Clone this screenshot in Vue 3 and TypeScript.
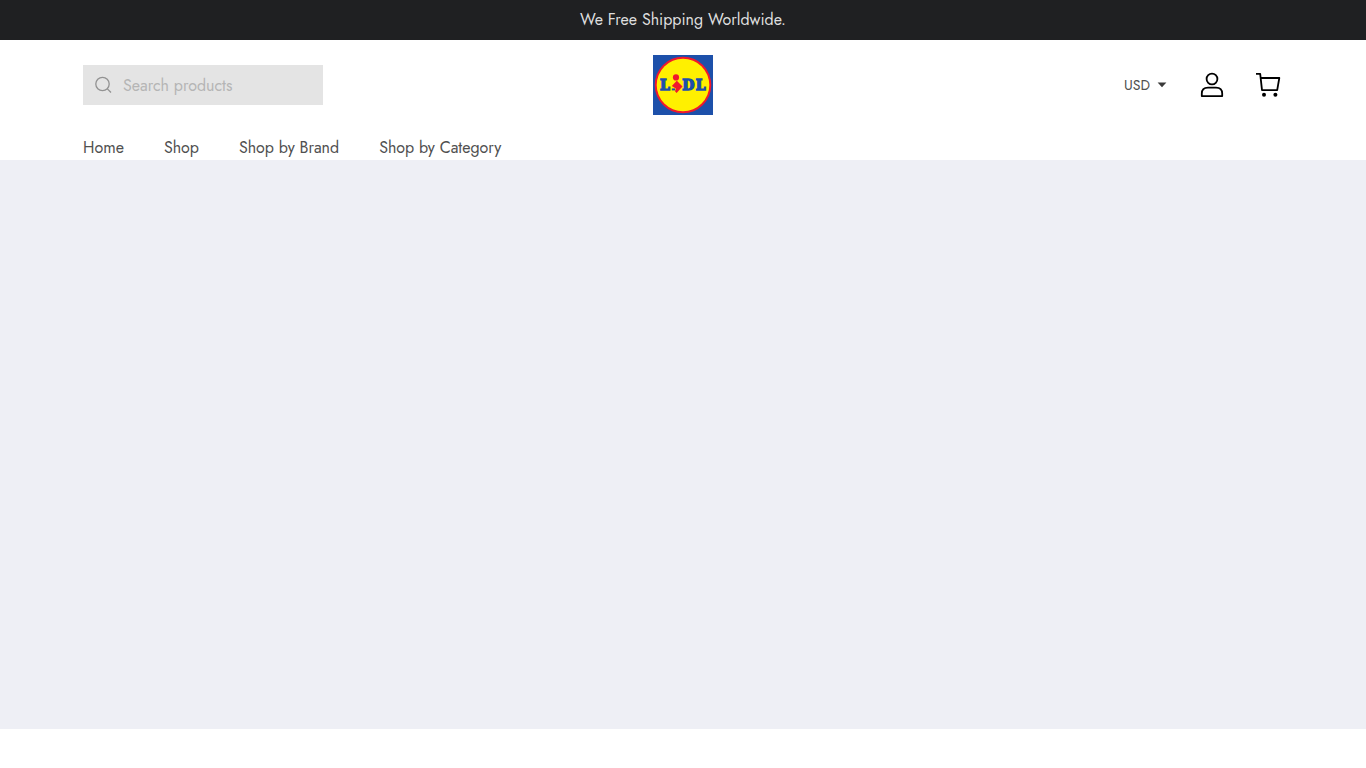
<script setup lang="ts">
import { ref } from 'vue'

interface NavLink {
  label: string
  href: string
}

const links: NavLink[] = [
  { label: 'Home', href: '#home' },
  { label: 'Shop', href: '#shop' },
  { label: 'Shop by Brand', href: '#brand' },
  { label: 'Shop by Category', href: '#category' },
]

const query = ref('')
const currency = ref('USD')
</script>

<template>
  <div class="page">
    <div class="notice">We Free Shipping Worldwide.</div>

    <header class="container">
      <div class="bar">
        <form class="search" role="search" @submit.prevent>
          <svg class="search-icon" viewBox="0 0 18 18" aria-hidden="true">
            <circle cx="7.5" cy="8" r="6.7" />
            <path d="M12.4 12.9 L16 16.5" />
          </svg>
          <input v-model="query" type="text" placeholder="Search products" aria-label="Search products" />
        </form>

        <a class="logo" href="#home" aria-label="Lidl home">
          <svg viewBox="0 0 60 60">
            <rect width="60" height="60" fill="#1d50aa" />
            <circle cx="30" cy="30" r="28.3" fill="#f0182d" />
            <circle cx="30" cy="30" r="26.3" fill="#fff000" />
            <g class="wordmark">
              <text x="7" y="34.8">L</text>
              <text x="29.3" y="34.8">D</text>
              <text x="42.8" y="34.8">L</text>
            </g>
            <path d="M18.8 33.4 H22 V35.4 H18.8 Z" fill="#1d50aa" />
            <path d="M18.8 30.9 L23.8 25.8 L29.5 31.5 L23.6 38 L22 36.2 L22.8 33.6 Z" fill="#f0182d" />
            <circle cx="23" cy="22.4" r="3.1" fill="#f0182d" />
          </svg>
        </a>

        <div class="actions">
          <label class="currency">
            <select v-model="currency" aria-label="Currency">
              <option>USD</option>
            </select>
            <svg class="caret" viewBox="0 0 10 6" aria-hidden="true"><path d="M0.6 0.6 H9.4 L5 5.2 Z" /></svg>
          </label>
          <button type="button" class="icon-button" aria-label="Account">
            <svg viewBox="0 0 26 26">
              <circle cx="13" cy="7" r="5.4" />
              <path d="M2.8 24.1 V21.6 Q2.8 15.6 9 15.6 H17 Q23.2 15.6 23.2 21.6 V24.1 Z" />
            </svg>
          </button>
          <button type="button" class="icon-button" aria-label="Cart">
            <svg viewBox="0 0 26 26">
              <path d="M1 1.9 H5.2 L7 18.2 H22.2 L24.3 6 H5.7" />
              <circle class="wheel" cx="9" cy="22.7" r="2" />
              <circle class="wheel" cx="20.4" cy="22.7" r="2" />
            </svg>
          </button>
        </div>
      </div>

      <nav class="nav" aria-label="Main">
        <a v-for="link in links" :key="link.label" :href="link.href">{{ link.label }}</a>
      </nav>
    </header>

    <main class="hero"></main>
  </div>
</template>

<style>
body {
  background: #fff;
}
</style>

<style scoped>
.page {
  font-family: Jost, Lato, "Liberation Sans", sans-serif;
  font-size: 16px;
  line-height: 24px;
  color: #505050;
}
.notice {
  padding: 8px 16px;
  background: #1f2022;
  color: #dedede;
  text-align: center;
}
.container {
  max-width: 1200px;
  margin: 0 auto;
}
.bar {
  display: grid;
  grid-template-columns: 1fr auto 1fr;
  align-items: center;
  padding: 15px 0 21px;
}
.search {
  display: flex;
  align-items: center;
  gap: 10px;
  width: 240px;
  height: 40px;
  padding: 0 12px;
  box-sizing: border-box;
  background: #e4e4e4;
}
.search-icon {
  flex: none;
  width: 18px;
  height: 18px;
  fill: none;
  stroke: #929292;
  stroke-width: 1.3;
}
.search input {
  flex: 1;
  min-width: 0;
  padding: 2px 0 0;
  border: 0;
  outline: 0;
  background: transparent;
  font: inherit;
  color: #505050;
}
.search input::placeholder {
  color: #b5b5b5;
  opacity: 1;
}
.logo,
.logo svg {
  display: block;
  width: 60px;
  height: 60px;
}
.wordmark {
  font-family: "DejaVu Serif", serif;
  font-size: 14px;
  font-weight: 700;
  fill: #1d50aa;
  stroke: #1d50aa;
  stroke-width: 1.4;
}
.actions {
  display: flex;
  justify-content: flex-end;
  align-items: center;
  gap: 26px;
}
.currency {
  display: flex;
  align-items: center;
  gap: 7px;
  padding-right: 4px;
}
.currency select {
  appearance: none;
  padding: 0;
  border: 0;
  background: transparent;
  font: inherit;
  font-size: 14px;
  color: #505050;
}
.caret {
  width: 10px;
  height: 6px;
  fill: #3a3a3a;
}
.icon-button {
  padding: 0 2px;
  border: 0;
  background: transparent;
}
.icon-button svg {
  display: block;
  width: 26px;
  height: 26px;
  fill: none;
  stroke: #000;
  stroke-width: 1.8;
  stroke-linejoin: round;
}
.icon-button .wheel {
  fill: #000;
  stroke: none;
}
.nav {
  display: flex;
  gap: 40px;
}
.nav a {
  color: inherit;
  text-decoration: none;
}
.hero {
  aspect-ratio: 2.4;
  background: #eeeff5;
}
</style>
